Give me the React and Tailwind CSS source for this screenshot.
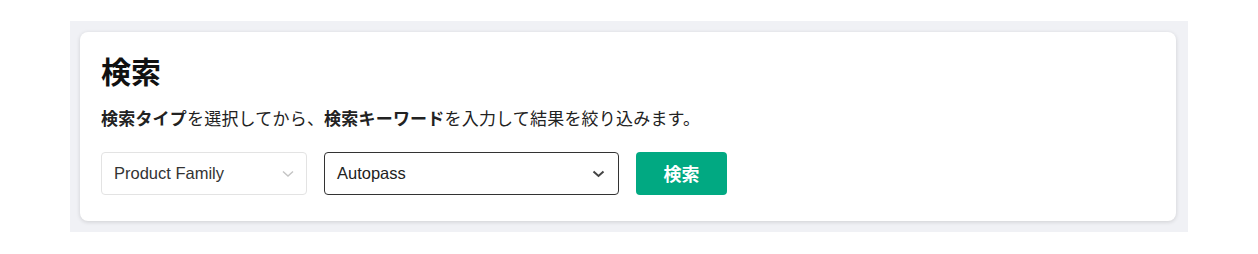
export default function App() {
  const jp = { fontFamily: '"Noto Sans CJK JP", "Noto Sans", sans-serif' };
  const lat = { fontFamily: '"Liberation Sans", Arial, sans-serif' };
  return (
    <div className="w-[1258px] h-[254px] bg-white pt-[21px] pl-[70px]">
      <div className="w-[1118px] h-[211px] bg-[#f0f1f5] pt-[11px] pl-[10px]">
        <div
          className="w-[1096px] h-[189px] bg-white rounded-[8px] shadow-[0_1px_4px_rgba(0,0,0,0.14)] pl-[21px] pt-[17px]"
          style={jp}
        >
          <h1 className="text-[30px] font-bold leading-[42px] text-[#111]">検索</h1>
          <p className="mt-[15px] text-[17px] leading-[24px] tracking-[0.2px] text-[#222]">
            <span className="font-bold">検索タイプ</span>を選択してから、<span className="font-bold">検索キーワード</span>を入力して結果を絞り込みます。
          </p>
          <div className="flex items-center mt-[22px]">
            <div className="w-[206px] h-[43px] border border-[#e3e3e3] rounded-[4px] flex items-center justify-between pl-[12px] pr-[12px]">
              <span className="text-[16.5px] text-[#333]" style={lat}>Product Family</span>
              <svg width="12" height="8" viewBox="0 0 12 8" fill="none">
                <path d="M1 1.5 L6 6 L11 1.5" stroke="#c4c4c4" strokeWidth="1.4" />
              </svg>
            </div>
            <div className="ml-[17px] w-[295px] h-[43px] border border-[#333] rounded-[4px] flex items-center justify-between pl-[12px] pr-[13px]">
              <span className="text-[16.5px] text-[#222]" style={lat}>Autopass</span>
              <svg width="13" height="8" viewBox="0 0 13 8" fill="none">
                <path d="M1.5 1.5 L6.5 6 L11.5 1.5" stroke="#444" strokeWidth="2" />
              </svg>
            </div>
            <button className="ml-[17px] w-[91px] h-[43px] bg-[#01a982] rounded-[4px] text-white text-[18px] font-bold flex items-center justify-center">
              検索
            </button>
          </div>
        </div>
      </div>
    </div>
  );
}
